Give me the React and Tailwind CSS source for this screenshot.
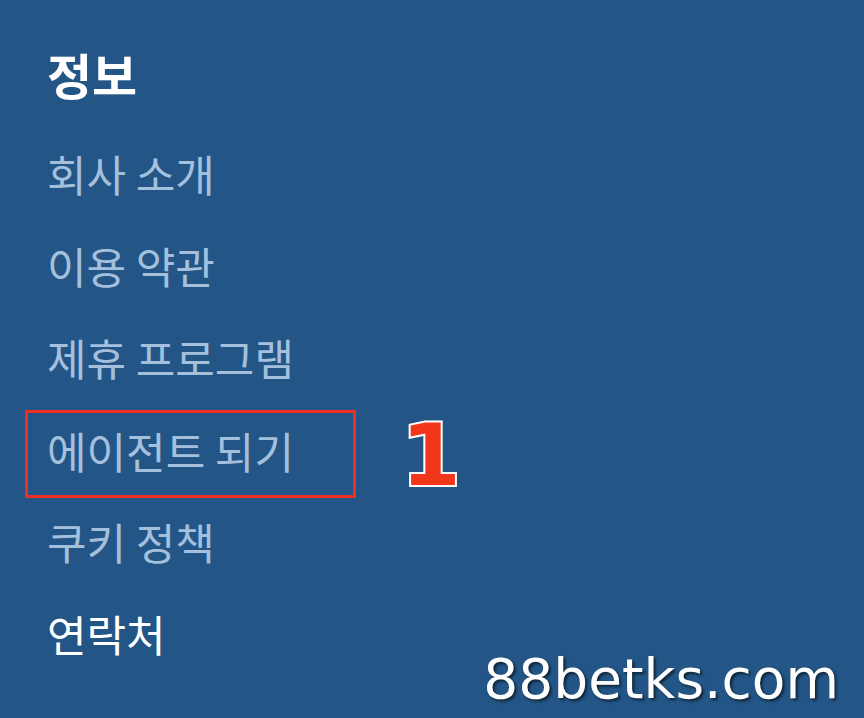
import React from 'react';

const links = [
    { label: '회사 소개' },
    { label: '이용 약관' },
    { label: '제휴 프로그램' },
    { label: '에이전트 되기', marked: true },
    { label: '쿠키 정책' },
    { label: '연락처', active: true },
];

export default function App() {
    return (
        <div
            className="relative w-[864px] h-[718px] overflow-hidden bg-[#235686]"
            style={{ fontFamily: '"Noto Sans CJK KR", "Noto Sans", sans-serif' }}
        >
            <div className="flex flex-col pl-[47px] pt-[28px]">
                {/* Heading */}
                <h2 className="text-[49px] leading-[92px] font-bold text-white">정보</h2>

                {/* Links */}
                <ul className="mt-[7px] flex flex-col">
                    {links.map((item) =>
                        item.marked ? (
                            <li key={item.label} className="flex items-start h-[92px]">
                                <span className="-ml-[22px] mt-[7px] flex items-center h-[88px] w-[331px] border-[3px] border-[#ee2f24] pl-[19px] pb-[8px] text-[43px] text-[#a4c0dc]">
                                    {item.label}
                                </span>
                                <span
                                    className="ml-[45px] mt-[6px] text-[86px] leading-[92px] font-bold text-[#f2361a] [-webkit-text-stroke:4px_white] [paint-order:stroke_fill]"
                                    style={{ fontFamily: '"DejaVu Sans", sans-serif' }}
                                >
                                    1
                                </span>
                            </li>
                        ) : (
                            <li
                                key={item.label}
                                className={`h-[92px] leading-[92px] text-[43px] ${item.active ? 'text-white' : 'text-[#a4c0dc]'}`}
                            >
                                {item.label}
                            </li>
                        )
                    )}
                </ul>
            </div>

            {/* Watermark */}
            <div
                className="absolute right-[25px] bottom-[11px] text-[55px] leading-none text-white [text-shadow:2px_2px_3px_rgba(0,0,0,0.6)]"
                style={{ fontFamily: '"DejaVu Sans", sans-serif' }}
            >
                88betks.com
            </div>
        </div>
    );
}
